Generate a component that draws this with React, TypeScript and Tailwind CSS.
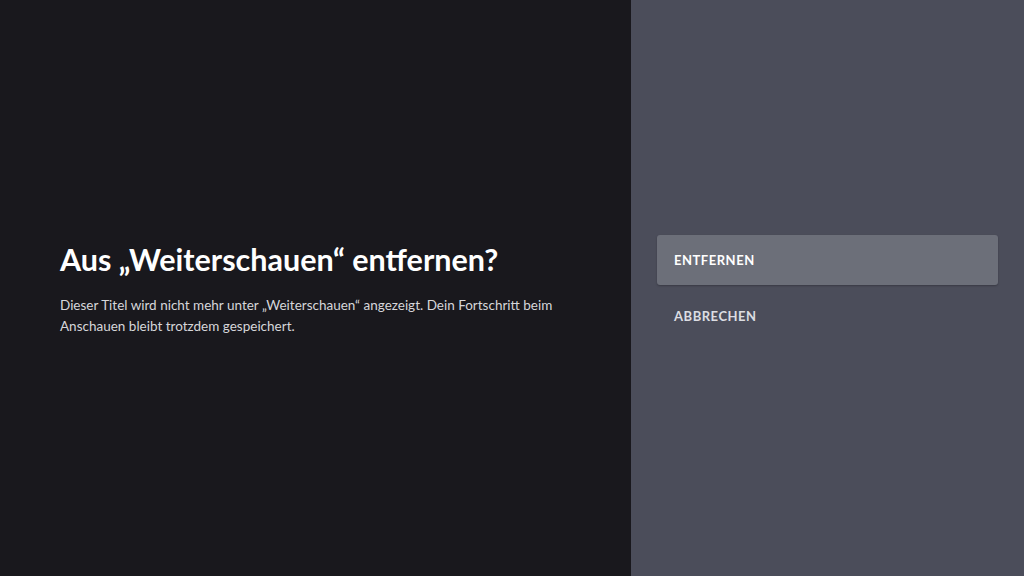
export default function App() {
  return (
    <div className="flex h-[576px] w-[1024px] overflow-hidden font-['Lato',sans-serif]">
      <div className="flex w-[631px] flex-col justify-center bg-[#19181d] pl-[60px] pr-[60px] pt-[2px]">
        <h1 className="text-[30.5px] font-bold leading-[36px] text-white">
          Aus „Weiterschauen“ entfernen?
        </h1>
        <p className="mt-[18px] text-[13.5px] leading-[21px] text-[#d6d6da]">
          Dieser Titel wird nicht mehr unter „Weiterschauen“ angezeigt. Dein Fortschritt beim Anschauen bleibt
          trotzdem gespeichert.
        </p>
      </div>
      <div className="flex flex-1 flex-col bg-[#4b4d5a] pl-[26px] pr-[26px] pt-[235px]">
        <button className="flex h-[50px] items-center rounded-[3px] bg-[#6c6f79] pl-[17px] pt-[2px] text-[13px] font-bold tracking-[0.04em] text-white shadow-[0_1px_2px_rgba(0,0,0,0.25)]">
          ENTFERNEN
        </button>
        <button className="flex h-[64px] items-center pl-[17px] text-[13px] font-bold tracking-[0.04em] text-[#dcdde2]">
          ABBRECHEN
        </button>
      </div>
    </div>
  );
}
